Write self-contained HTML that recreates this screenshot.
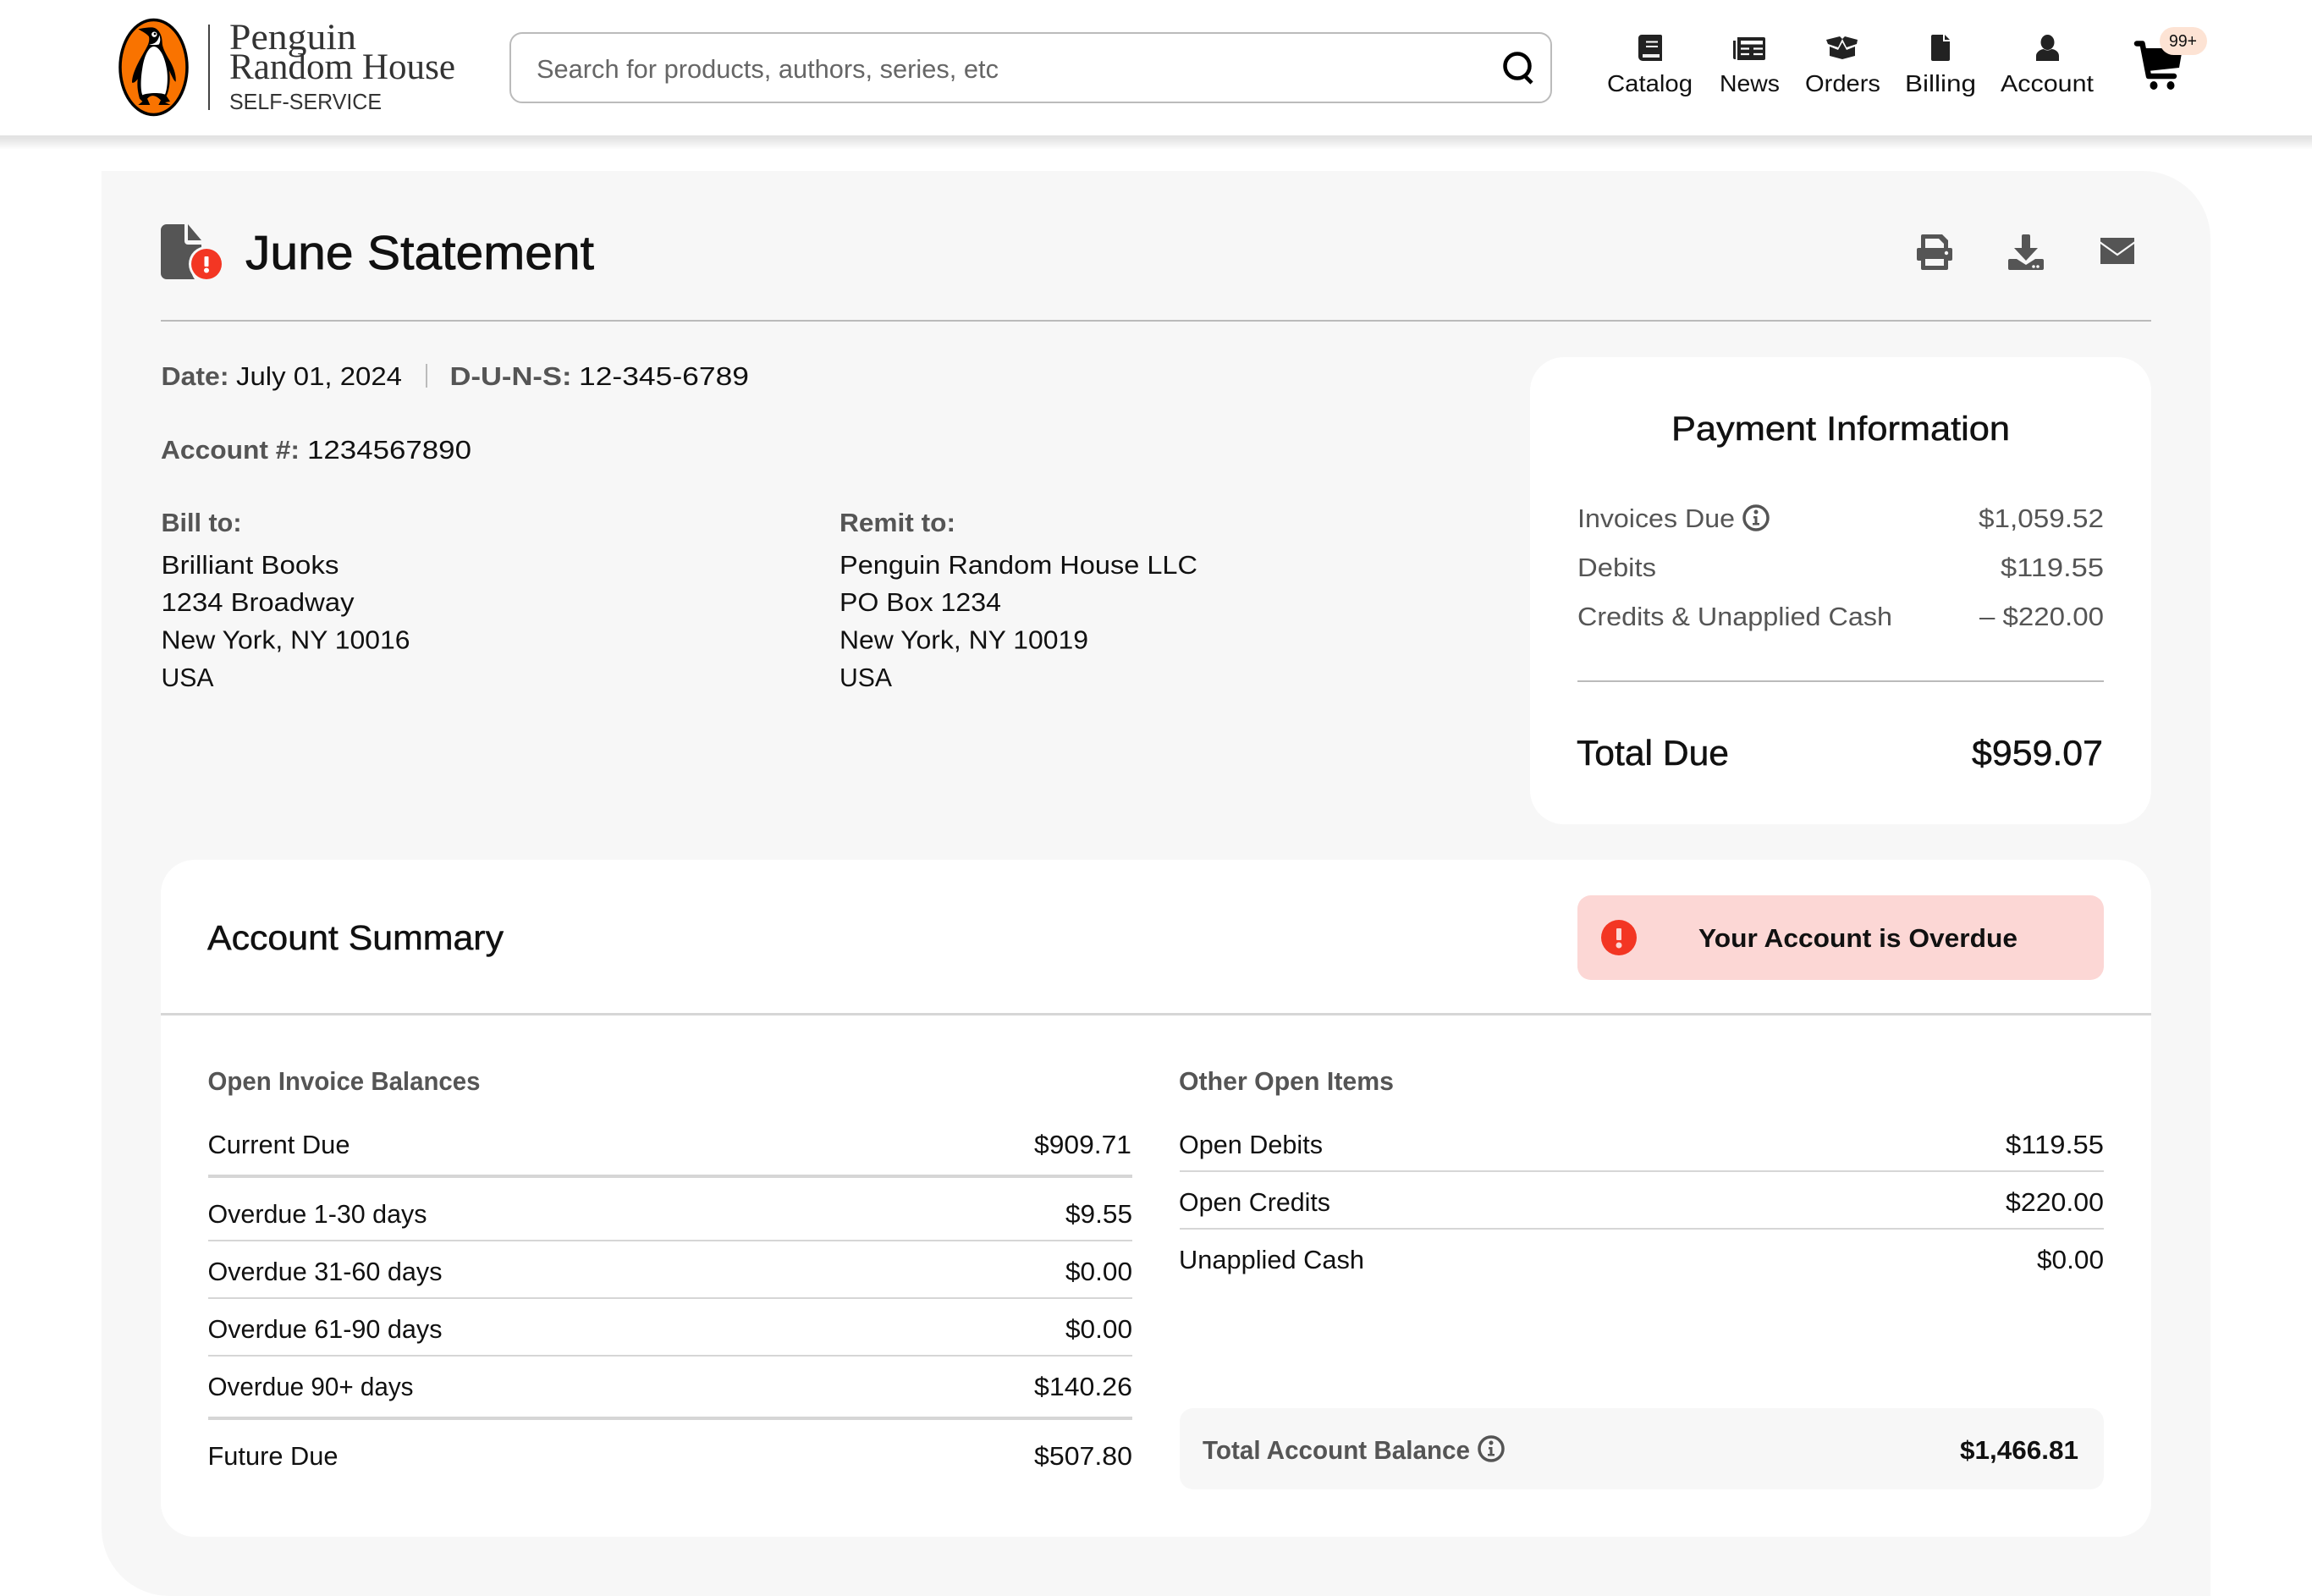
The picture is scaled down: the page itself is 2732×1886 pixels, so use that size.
<!DOCTYPE html>
<html lang="en"><head><meta charset="utf-8"><title>June Statement</title>
<style>
html,body{margin:0;padding:0;background:#fff;width:2732px;height:1886px;overflow:hidden}
svg{display:block}
text{font-family:"Liberation Sans",sans-serif;fill:#111;font-size:31px}
.l{fill:#555;font-weight:700}
.g{fill:#555}
.n{font-size:28px}
.m{stroke:#111;stroke-width:.5px}
.k{font-weight:700}
</style></head><body>
<svg width="2732" height="1886" viewBox="0 0 2732 1886" xmlns="http://www.w3.org/2000/svg">
<defs><filter id="s" x="-2%" y="-20%" width="104%" height="160%"><feGaussianBlur stdDeviation="7"/></filter></defs>
<!-- panel -->
<path d="M120 202H2532a80 80 0 0 1 80 80V1886H200a80 80 0 0 1-80-80Z" fill="#f7f7f7"/>
<!-- header -->
<rect x="-20" y="150" width="2772" height="18" fill="#000" opacity=".14" filter="url(#s)"/>
<rect x="0" y="0" width="2732" height="160" fill="#fff"/>
<!-- logo -->
<ellipse cx="181.500" cy="79.500" rx="39.500" ry="56" fill="#f97300" stroke="#000" stroke-width="3.500"/>
<g transform="translate(100 0) scale(.33333)">
<path d="M190 103C205 100 220 97 240 97C262 99 275 125 275 150C275 170 290 195 305 220C318 245 325 270 323 290C315 285 307 265 300 250C305 285 300 320 290 340L303 360L285 363L305 372L262 372L270 355C250 335 235 335 222 350L232 372L190 372L205 360L195 350C190 330 185 310 188 280C180 290 175 295 168 293C168 265 185 230 205 195C222 165 232 150 228 130C222 120 205 112 190 103Z" fill="#000"/>
<path d="M245 165C265 165 285 200 292 250C297 290 290 325 285 335C270 328 225 328 205 337C198 320 198 280 205 240C212 195 228 165 245 165Z" fill="#fff"/>
<path d="M228 157C245 158 260 150 265 125C270 140 268 150 263 158C250 160 240 160 228 157Z" fill="#fff"/>
<circle cx="247" cy="122" r="9.500" fill="#fff"/><circle cx="249" cy="120" r="4" fill="#000"/>
</g>
<rect x="246" y="29" width="2" height="101" fill="#444"/>
<text x="271" y="58" style="font-family:'Liberation Serif',serif;font-size:43px;fill:#333" textLength="150" lengthAdjust="spacingAndGlyphs">Penguin</text>
<text x="271" y="93" style="font-family:'Liberation Serif',serif;font-size:43px;fill:#333" textLength="267" lengthAdjust="spacingAndGlyphs">Random House</text>
<text x="271" y="129" style="font-size:26px;fill:#333" textLength="180" lengthAdjust="spacingAndGlyphs">SELF-SERVICE</text>
<!-- search -->
<rect x="603" y="39" width="1230" height="82" rx="14" fill="#fff" stroke="#bbb" stroke-width="2"/>
<text x="634" y="92" style="fill:#666" textLength="546" lengthAdjust="spacingAndGlyphs">Search for products, authors, series, etc</text>
<circle cx="1793" cy="78" r="14.500" fill="none" stroke="#000" stroke-width="4.500"/><path d="M1802 90L1810 98" stroke="#000" stroke-width="4.500" fill="none"/>
<!-- nav icons -->
<path d="M1940 41H1962a2 2 0 0 1 2 2V72H1941a5 5 0 0 1-5-5V45a4 4 0 0 1 4-4Z" fill="#222"/>
<path d="M1945 49.500h14M1945 55h14" stroke="#fff" stroke-width="2"/><rect x="1941" y="64" width="20" height="4" fill="#eee"/>
<path d="M2048 48h3v22h-1a2 2 0 0 1-2-2ZM2053 44h31a2 2 0 0 1 2 2v23a2 2 0 0 1-2 2h-31Z" fill="#222"/>
<rect x="2057" y="48" width="26" height="4.500" fill="#fff"/><path d="M2057 57.500h10M2072 57.500h11M2057 64h10M2072 64h11" stroke="#fff" stroke-width="2.200"/>
<path d="M2158 47L2174 43L2177 46L2172 56L2160 52ZM2195 47L2180 43L2177 46L2182 56L2194 52ZM2162 55L2172 59L2177 50L2182 59L2192 55V66L2177 70L2162 66Z" fill="#222"/>
<path d="M2284 41H2296V49H2304V70a2 2 0 0 1-2 2H2284a2 2 0 0 1-2-2V43a2 2 0 0 1 2-2ZM2298 41L2304 47H2298Z" fill="#222"/>
<ellipse cx="2419.500" cy="50" rx="8" ry="9" fill="#222"/><path d="M2406 72V66C2406 61 2412 58 2415 58C2417 60 2422 60 2424 58C2428 58 2433 61 2433 66V72Z" fill="#222"/>
<text x="1899" y="108" class="n" textLength="101" lengthAdjust="spacingAndGlyphs">Catalog</text>
<text x="2032" y="108" class="n" textLength="71" lengthAdjust="spacingAndGlyphs">News</text>
<text x="2133" y="108" class="n" textLength="89" lengthAdjust="spacingAndGlyphs">Orders</text>
<text x="2251" y="108" class="n" textLength="84" lengthAdjust="spacingAndGlyphs">Billing</text>
<text x="2364" y="108" class="n" textLength="110" lengthAdjust="spacingAndGlyphs">Account</text>
<!-- cart -->
<path d="M2525 51.500H2531.500L2539 90H2569" fill="none" stroke="#000" stroke-width="6.500" stroke-linecap="round" stroke-linejoin="round"/>
<path d="M2534 57H2579L2575 80L2538 84Z" fill="#000"/>
<ellipse cx="2545" cy="101" rx="4.500" ry="5" fill="#000"/><ellipse cx="2565" cy="101" rx="4.500" ry="5" fill="#000"/>
<rect x="2552" y="32" width="56" height="33" rx="16.500" fill="#fde3d4"/>
<text x="2563" y="55" style="font-size:20px" textLength="33" lengthAdjust="spacingAndGlyphs">99+</text>
<!-- title -->
<path d="M197 265H218V285a4 4 0 0 0 4 4H238V295A24 24 0 0 0 230 330H197a7 7 0 0 1-7-7V272a7 7 0 0 1 7-7ZM222 265L238 284H222Z" fill="#555"/>
<circle cx="244" cy="312" r="21" fill="#f7f7f7"/><circle cx="244" cy="312" r="18" fill="#f33623"/>
<rect x="241.500" y="303" width="5" height="12" rx="1" fill="#fff"/><circle cx="244" cy="319.500" r="3" fill="#fff"/>
<text x="290" y="318" class="m" style="font-size:57px;stroke-width:.8px" textLength="412" lengthAdjust="spacingAndGlyphs">June Statement</text>
<!-- actions -->
<path d="M2272 277H2295L2302 284V293H2305a2 2 0 0 1 2 2V306a2 2 0 0 1-2 2H2302V317a2 2 0 0 1-2 2H2272a2 2 0 0 1-2-2V308H2267a2 2 0 0 1-2-2V295a2 2 0 0 1 2-2H2270V279a2 2 0 0 1 2-2Z" fill="#555"/>
<path d="M2275 282H2291L2297 288V293H2275ZM2275 306H2297V314H2275Z" fill="#f7f7f7"/><circle cx="2300" cy="299" r="2.200" fill="#f7f7f7"/>
<path d="M2389 279a2 2 0 0 1 2-2h6a2 2 0 0 1 2 2V293H2408L2394 308L2380 293H2389Z" fill="#555"/>
<path d="M2375 306H2383L2394 313L2405 306H2413a2 2 0 0 1 2 2V317a2 2 0 0 1-2 2H2375a2 2 0 0 1-2-2V308a2 2 0 0 1 2-2Z" fill="#555"/>
<circle cx="2403" cy="315" r="1.800" fill="#f7f7f7"/><circle cx="2408" cy="315" r="1.800" fill="#f7f7f7"/>
<rect x="2482" y="281" width="40" height="31" fill="#555"/><path d="M2481 286L2502 301L2523 286" fill="none" stroke="#f7f7f7" stroke-width="2.200"/>
<rect x="190" y="378" width="2352" height="2" fill="#bbb"/>
<!-- meta -->
<text x="190.500" y="455" class="l" textLength="80" lengthAdjust="spacingAndGlyphs">Date:</text>
<text x="279" y="455" textLength="196" lengthAdjust="spacingAndGlyphs">July 01, 2024</text>
<rect x="503" y="430" width="2" height="28" fill="#bbb"/>
<text x="531.500" y="455" class="l" textLength="144" lengthAdjust="spacingAndGlyphs">D-U-N-S:</text>
<text x="684" y="455" textLength="201" lengthAdjust="spacingAndGlyphs">12-345-6789</text>
<text x="190" y="542" class="l" textLength="164" lengthAdjust="spacingAndGlyphs">Account #:</text>
<text x="363" y="542" textLength="194" lengthAdjust="spacingAndGlyphs">1234567890</text>
<text x="190.500" y="628" class="l" textLength="95" lengthAdjust="spacingAndGlyphs">Bill to:</text>
<text x="190.500" y="678" textLength="210" lengthAdjust="spacingAndGlyphs">Brilliant Books</text>
<text x="190.500" y="722" textLength="228" lengthAdjust="spacingAndGlyphs">1234 Broadway</text>
<text x="190.500" y="766.500" textLength="294" lengthAdjust="spacingAndGlyphs">New York, NY 10016</text>
<text x="190.500" y="811" textLength="62" lengthAdjust="spacingAndGlyphs">USA</text>
<text x="992" y="628" class="l" textLength="137" lengthAdjust="spacingAndGlyphs">Remit to:</text>
<text x="992" y="678" textLength="423" lengthAdjust="spacingAndGlyphs">Penguin Random House LLC</text>
<text x="992" y="722" textLength="191" lengthAdjust="spacingAndGlyphs">PO Box 1234</text>
<text x="992" y="766.500" textLength="294" lengthAdjust="spacingAndGlyphs">New York, NY 10019</text>
<text x="992" y="811" textLength="62" lengthAdjust="spacingAndGlyphs">USA</text>
<!-- payment card -->
<rect x="1808" y="422" width="734" height="552" rx="40" fill="#fff"/>
<text x="1975" y="520" class="m" style="font-size:40px" textLength="400" lengthAdjust="spacingAndGlyphs">Payment Information</text>
<text x="1864" y="623" class="g" textLength="186" lengthAdjust="spacingAndGlyphs">Invoices Due</text>
<circle cx="2075" cy="612" r="14" fill="none" stroke="#555" stroke-width="3.500"/><circle cx="2075" cy="605" r="2.500" fill="#555"/><path d="M2072 610h4.500v8h2.500v2.500h-8v-2.500h2.500v-5.500h-1.500Z" fill="#555"/>
<text x="2338" y="623" class="g" textLength="148" lengthAdjust="spacingAndGlyphs">$1,059.52</text>
<text x="1864" y="681" class="g" textLength="93" lengthAdjust="spacingAndGlyphs">Debits</text>
<text x="2364" y="681" class="g" textLength="122" lengthAdjust="spacingAndGlyphs">$119.55</text>
<text x="1864" y="739" class="g" textLength="372" lengthAdjust="spacingAndGlyphs">Credits &amp; Unapplied Cash</text>
<text x="2339" y="739" class="g" textLength="147" lengthAdjust="spacingAndGlyphs">– $220.00</text>
<rect x="1864" y="804" width="622" height="2" fill="#bbb"/>
<text x="1863" y="904" class="m" style="font-size:42px" textLength="180" lengthAdjust="spacingAndGlyphs">Total Due</text>
<text x="2330" y="904" class="m" style="font-size:42px" textLength="155" lengthAdjust="spacingAndGlyphs">$959.07</text>
<!-- summary card -->
<rect x="190" y="1016" width="2352" height="800" rx="40" fill="#fff"/>
<text x="245" y="1122" class="m" style="font-size:41px" textLength="350" lengthAdjust="spacingAndGlyphs">Account Summary</text>
<rect x="1864" y="1058" width="622" height="100" rx="16" fill="#fcd7d5"/>
<circle cx="1913" cy="1108" r="21" fill="#f33623"/><rect x="1910" y="1097" width="6" height="14" rx="1" fill="#fcd7d5"/><circle cx="1913" cy="1117" r="3.500" fill="#fcd7d5"/>
<text x="2007" y="1119" class="k" style="font-size:31px" textLength="377" lengthAdjust="spacingAndGlyphs">Your Account is Overdue</text>
<rect x="190" y="1197" width="2352" height="3" fill="#d6d6d6"/>
<!-- left column -->
<text x="245.500" y="1288" class="l" textLength="322" lengthAdjust="spacingAndGlyphs">Open Invoice Balances</text>
<text x="245.500" y="1363" textLength="168" lengthAdjust="spacingAndGlyphs">Current Due</text>
<text x="1222" y="1363" textLength="115" lengthAdjust="spacingAndGlyphs">$909.71</text>
<rect x="246" y="1388" width="1092" height="4" fill="#d6d6d6"/>
<text x="245.500" y="1445" textLength="259" lengthAdjust="spacingAndGlyphs">Overdue 1-30 days</text>
<text x="1259" y="1445" textLength="79" lengthAdjust="spacingAndGlyphs">$9.55</text>
<rect x="246" y="1465" width="1092" height="2" fill="#d6d6d6"/>
<text x="245.500" y="1513" textLength="277" lengthAdjust="spacingAndGlyphs">Overdue 31-60 days</text>
<text x="1259" y="1513" textLength="79" lengthAdjust="spacingAndGlyphs">$0.00</text>
<rect x="246" y="1533" width="1092" height="2" fill="#d6d6d6"/>
<text x="245.500" y="1581" textLength="277" lengthAdjust="spacingAndGlyphs">Overdue 61-90 days</text>
<text x="1259" y="1581" textLength="79" lengthAdjust="spacingAndGlyphs">$0.00</text>
<rect x="246" y="1601" width="1092" height="2" fill="#d6d6d6"/>
<text x="245.500" y="1649" textLength="243" lengthAdjust="spacingAndGlyphs">Overdue 90+ days</text>
<text x="1222" y="1649" textLength="116" lengthAdjust="spacingAndGlyphs">$140.26</text>
<rect x="246" y="1674" width="1092" height="4" fill="#d6d6d6"/>
<text x="245.500" y="1731" textLength="154" lengthAdjust="spacingAndGlyphs">Future Due</text>
<text x="1222" y="1731" textLength="116" lengthAdjust="spacingAndGlyphs">$507.80</text>
<!-- right column -->
<text x="1393" y="1288" class="l" textLength="254" lengthAdjust="spacingAndGlyphs">Other Open Items</text>
<text x="1393" y="1363" textLength="170" lengthAdjust="spacingAndGlyphs">Open Debits</text>
<text x="2370" y="1363" textLength="116" lengthAdjust="spacingAndGlyphs">$119.55</text>
<rect x="1394" y="1383" width="1092" height="2" fill="#d6d6d6"/>
<text x="1393" y="1431" textLength="179" lengthAdjust="spacingAndGlyphs">Open Credits</text>
<text x="2370" y="1431" textLength="116" lengthAdjust="spacingAndGlyphs">$220.00</text>
<rect x="1394" y="1451" width="1092" height="2" fill="#d6d6d6"/>
<text x="1393" y="1499" textLength="219" lengthAdjust="spacingAndGlyphs">Unapplied Cash</text>
<text x="2407" y="1499" textLength="79" lengthAdjust="spacingAndGlyphs">$0.00</text>
<rect x="1394" y="1664" width="1092" height="96" rx="16" fill="#f7f7f7"/>
<text x="1421" y="1724" class="l" textLength="316" lengthAdjust="spacingAndGlyphs">Total Account Balance</text>
<g transform="translate(-313 1100)"><circle cx="2075" cy="612" r="14" fill="none" stroke="#555" stroke-width="3.500"/><circle cx="2075" cy="605" r="2.500" fill="#555"/><path d="M2072 610h4.500v8h2.500v2.500h-8v-2.500h2.500v-5.500h-1.500Z" fill="#555"/></g>
<text x="2316" y="1724" class="k" textLength="140" lengthAdjust="spacingAndGlyphs">$1,466.81</text>
</svg>
</body></html>
